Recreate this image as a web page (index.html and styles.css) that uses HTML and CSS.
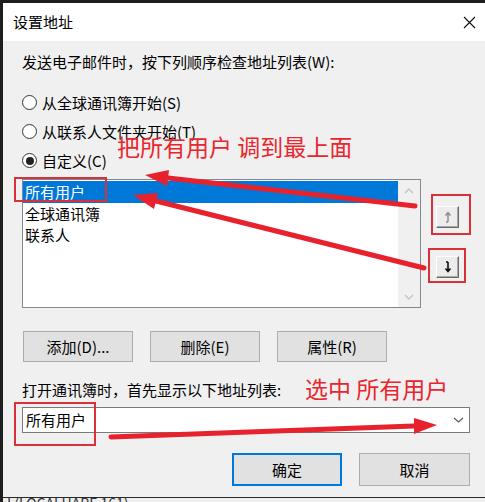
FILE: index.html
```html
<!DOCTYPE html>
<html lang="zh-CN">
<head>
<meta charset="utf-8">
<title>设置地址</title>
<link rel="stylesheet" href="styles.css">
</head>
<body>
<div class="window">
  <div class="titlebar">
    <span class="title">设置地址</span>
    <svg class="close" width="13" height="13" viewBox="0 0 13 13"><path d="M1 1 L12 12 M12 1 L1 12" stroke="#111" stroke-width="1.1" fill="none"/></svg>
  </div>
  <div class="body">
    <div class="label">发送电子邮件时，按下列顺序检查地址列表(W):</div>
    <div class="radios">
      <div class="radio"><span class="circle"></span><span>从全球通讯簿开始(S)</span></div>
      <div class="radio"><span class="circle"></span><span>从联系人文件夹开始(T)</span></div>
      <div class="radio"><span class="circle checked"></span><span>自定义(C)</span></div>
    </div>
    <div class="listrow">
      <div class="listbox">
        <div class="items">
          <div class="item selected">所有用户</div>
          <div class="item">全球通讯簿</div>
          <div class="item">联系人</div>
        </div>
        <div class="scrollbar">
          <div class="sarrow"><svg width="10" height="6" viewBox="0 0 10 6"><path d="M1 5 L5 1 L9 5" stroke="#c2c2c2" stroke-width="1.3" fill="none"/></svg></div>
          <div class="sarrow"><svg width="10" height="6" viewBox="0 0 10 6"><path d="M1 1 L5 5 L9 1" stroke="#c2c2c2" stroke-width="1.3" fill="none"/></svg></div>
        </div>
      </div>
      <div class="movebtns">
        <div class="mbtn mbtn-up"><svg width="9" height="12" viewBox="0 0 9 12"><path d="M5 11 V2 M2.5 4.5 L5 1.5 L7.5 4.5 M5 11 H3" stroke="#8a8a8a" stroke-width="1.4" fill="none"/></svg></div>
        <div class="mbtn mbtn-down"><svg width="9" height="12" viewBox="0 0 9 12"><path d="M5 1 V10 M2.5 7.5 L5 10.5 L7.5 7.5 M5 1 H3" stroke="#111" stroke-width="1.6" fill="none"/></svg></div>
      </div>
    </div>
    <div class="btnrow">
      <div class="btn">添加(D)...</div>
      <div class="btn">删除(E)</div>
      <div class="btn">属性(R)</div>
    </div>
    <div class="label label2">打开通讯簿时，首先显示以下地址列表:</div>
    <div class="combo">
      <span>所有用户</span>
      <svg width="11" height="6" viewBox="0 0 11 6"><path d="M1 1 L5.5 5 L10 1" stroke="#555" stroke-width="1.1" fill="none"/></svg>
    </div>
    <div class="footer">
      <div class="btn btn-default">确定</div>
      <div class="btn btn-cancel">取消</div>
    </div>
  </div>
</div>
<div class="strip"><span>I (LOCALHARE 161)</span></div>

<svg class="annot" width="485" height="502" viewBox="0 0 485 502">
  <g fill="none" stroke="#d9303a" stroke-width="2">
    <rect x="15" y="178" width="91" height="23"/>
    <rect x="432" y="195" width="38" height="39"/>
    <rect x="429" y="249" width="36" height="33"/>
    <rect x="15" y="403" width="80" height="42"/>
  </g>
  <g stroke="#e8222c" stroke-width="5" stroke-linecap="round" fill="none">
    <path d="M415 206 L168 178"/>
    <path d="M424 268 L156 201"/>
    <path d="M111 437 L414 426"/>
  </g>
  <g fill="#e8222c">
    <polygon points="145,175 169,170 167,186"/>
    <polygon points="133,195 158,193 154,209"/>
    <polygon points="437,425 414,418 414,434"/>
  </g>
</svg>
<div class="note note1">把所有用户 调到最上面</div>
<div class="note note2">选中 所有用户</div>
</body>
</html>
```
FILE: styles.css
```css
html, body {
  margin: 0;
  padding: 0;
}
body {
  width: 485px;
  height: 502px;
  overflow: hidden;
  background: #1e1e1e;
  position: relative;
  font-family: "Noto Sans CJK SC", "Noto Sans", sans-serif;
  font-size: 15px;
  color: #000;
}
.window {
  margin: 3px 0 0 3px;
  width: 482px;
  border-bottom: 1px solid #2a2a2a;
}
.titlebar {
  height: 38px;
  background: #fff;
  display: flex;
  align-items: center;
  justify-content: space-between;
  padding: 0 9px 0 10px;
}
.title {
  line-height: 20px;
}
.body {
  background: #f0f0f0;
  height: 456px;
  padding: 0 15px 0 19px;
  box-sizing: border-box;
  overflow: hidden;
}
.label {
  line-height: 20px;
  padding-top: 11px;
}
.radios {
  margin-top: 16px;
}
.radio {
  height: 29px;
  display: flex;
  align-items: center;
  line-height: 20px;
}
.circle {
  width: 15px;
  height: 15px;
  box-sizing: border-box;
  border: 1.3px solid #333;
  border-radius: 50%;
  background: #fff;
  margin-right: 5px;
  display: flex;
  align-items: center;
  justify-content: center;
}
.circle.checked::after {
  content: "";
  width: 8px;
  height: 8px;
  border-radius: 50%;
  background: #222;
}
.listrow {
  margin-top: 4px;
  display: flex;
  align-items: flex-start;
}
.listbox {
  width: 399px;
  height: 129px;
  box-sizing: border-box;
  border: 1px solid #828790;
  background: #fff;
  display: flex;
}
.items {
  width: 375px;
  padding-top: 1px;
}
.item {
  height: 21.5px;
  line-height: 21.5px;
  padding-left: 2px;
}
.item.selected {
  background: #0078d7;
  color: #fff;
}
.scrollbar {
  width: 22px;
  background: #f0f0f0;
  display: flex;
  flex-direction: column;
  justify-content: space-between;
}
.sarrow {
  height: 21px;
  display: flex;
  align-items: center;
  justify-content: center;
}
.movebtns {
  margin-left: 15px;
  display: flex;
  flex-direction: column;
}
.mbtn {
  width: 23px;
  height: 22px;
  box-sizing: border-box;
  background: #ececec;
  border-top: 1px solid #fff;
  border-left: 1px solid #fff;
  border-right: 1px solid #6a6a6a;
  border-bottom: 1px solid #6a6a6a;
  box-shadow: inset -1px -1px 0 #a8a8a8;
  display: flex;
  align-items: center;
  justify-content: center;
}
.mbtn-up {
  margin-top: 27px;
}
.mbtn-down {
  margin-top: 28px;
}
.btnrow {
  margin-top: 23px;
  display: flex;
  gap: 17px;
  padding-left: 1px;
}
.btn {
  width: 110px;
  height: 31px;
  box-sizing: border-box;
  background: #e1e1e1;
  border: 1px solid #adadad;
  display: flex;
  align-items: center;
  justify-content: center;
  line-height: 20px;
}
.label2 {
  padding-top: 0;
  margin-top: 18px;
}
.combo {
  margin-top: 7px;
  width: 448px;
  height: 26px;
  box-sizing: border-box;
  border: 1px solid #7a7a7a;
  background: #fff;
  display: flex;
  align-items: center;
  justify-content: space-between;
  padding: 0 5px 0 3px;
  line-height: 20px;
}
.footer {
  margin-top: 20px;
  display: flex;
  justify-content: flex-end;
  gap: 17px;
}
.footer .btn {
  height: 33px;
}
.btn-default {
  border: 2px solid #0078d7;
}
.btn-cancel {
  width: 111px;
}
.strip {
  height: 4px;
  background: #eeeeee;
  margin-left: 3px;
  overflow: hidden;
  font-size: 14px;
  line-height: 14px;
  color: #333;
}
.strip span {
  display: block;
  margin-top: -2px;
  padding-left: 4px;
}
.annot {
  position: absolute;
  left: 0;
  top: 0;
  pointer-events: none;
}
.note {
  position: absolute;
  color: #e8262e;
  font-size: 23px;
  line-height: 28px;
  white-space: nowrap;
}
.note1 {
  left: 117px;
  top: 132px;
}
.note2 {
  left: 305px;
  top: 374px;
}
```
